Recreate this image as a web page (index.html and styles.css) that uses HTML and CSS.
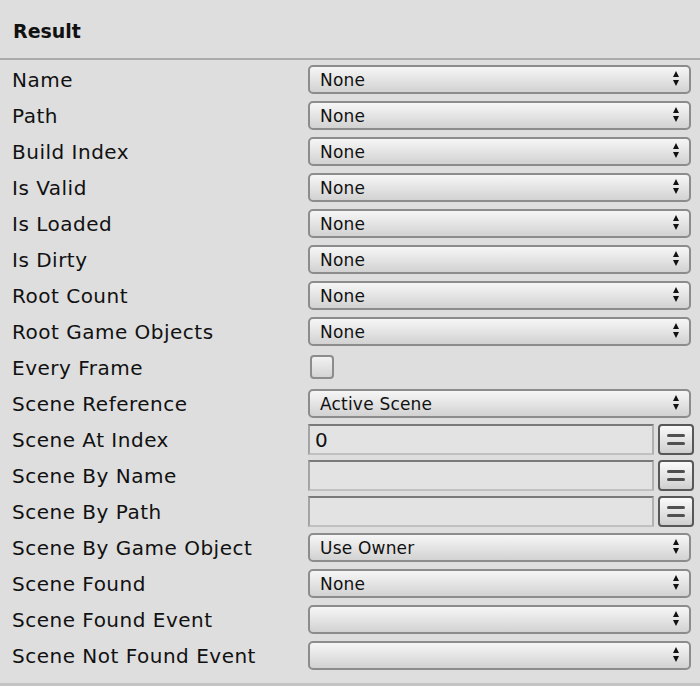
FILE: index.html
```html
<!DOCTYPE html>
<html>
<head>
<meta charset="utf-8">
<link rel="stylesheet" href="styles.css">
</head>
<body>
<div class="panel">
  <div class="header">Result</div>
  <div class="rows">
    <div class="row"><span class="label">Name</span><div class="dropdown"><span class="val">None</span><svg class="arrows" viewBox="0 0 8 18" width="8" height="18"><path d="M1 7 L4 1 L7 7 Z M1 10 L4 16 L7 10 Z" fill="#111"/></svg></div></div>
    <div class="row"><span class="label">Path</span><div class="dropdown"><span class="val">None</span><svg class="arrows" viewBox="0 0 8 18" width="8" height="18"><path d="M1 7 L4 1 L7 7 Z M1 10 L4 16 L7 10 Z" fill="#111"/></svg></div></div>
    <div class="row"><span class="label">Build Index</span><div class="dropdown"><span class="val">None</span><svg class="arrows" viewBox="0 0 8 18" width="8" height="18"><path d="M1 7 L4 1 L7 7 Z M1 10 L4 16 L7 10 Z" fill="#111"/></svg></div></div>
    <div class="row"><span class="label">Is Valid</span><div class="dropdown"><span class="val">None</span><svg class="arrows" viewBox="0 0 8 18" width="8" height="18"><path d="M1 7 L4 1 L7 7 Z M1 10 L4 16 L7 10 Z" fill="#111"/></svg></div></div>
    <div class="row"><span class="label">Is Loaded</span><div class="dropdown"><span class="val">None</span><svg class="arrows" viewBox="0 0 8 18" width="8" height="18"><path d="M1 7 L4 1 L7 7 Z M1 10 L4 16 L7 10 Z" fill="#111"/></svg></div></div>
    <div class="row"><span class="label">Is Dirty</span><div class="dropdown"><span class="val">None</span><svg class="arrows" viewBox="0 0 8 18" width="8" height="18"><path d="M1 7 L4 1 L7 7 Z M1 10 L4 16 L7 10 Z" fill="#111"/></svg></div></div>
    <div class="row"><span class="label">Root Count</span><div class="dropdown"><span class="val">None</span><svg class="arrows" viewBox="0 0 8 18" width="8" height="18"><path d="M1 7 L4 1 L7 7 Z M1 10 L4 16 L7 10 Z" fill="#111"/></svg></div></div>
    <div class="row"><span class="label">Root Game Objects</span><div class="dropdown"><span class="val">None</span><svg class="arrows" viewBox="0 0 8 18" width="8" height="18"><path d="M1 7 L4 1 L7 7 Z M1 10 L4 16 L7 10 Z" fill="#111"/></svg></div></div>
    <div class="row"><span class="label">Every Frame</span><div class="control"><div class="checkbox"></div></div></div>
    <div class="row"><span class="label">Scene Reference</span><div class="dropdown"><span class="val">Active Scene</span><svg class="arrows" viewBox="0 0 8 18" width="8" height="18"><path d="M1 7 L4 1 L7 7 Z M1 10 L4 16 L7 10 Z" fill="#111"/></svg></div></div>
    <div class="row"><span class="label">Scene At Index</span><div class="control field-row"><div class="field">0</div><div class="eqbtn"><span class="bar"></span><span class="bar"></span></div></div></div>
    <div class="row"><span class="label">Scene By Name</span><div class="control field-row"><div class="field"></div><div class="eqbtn"><span class="bar"></span><span class="bar"></span></div></div></div>
    <div class="row"><span class="label">Scene By Path</span><div class="control field-row"><div class="field"></div><div class="eqbtn"><span class="bar"></span><span class="bar"></span></div></div></div>
    <div class="row"><span class="label">Scene By Game Object</span><div class="dropdown"><span class="val">Use Owner</span><svg class="arrows" viewBox="0 0 8 18" width="8" height="18"><path d="M1 7 L4 1 L7 7 Z M1 10 L4 16 L7 10 Z" fill="#111"/></svg></div></div>
    <div class="row"><span class="label">Scene Found</span><div class="dropdown"><span class="val">None</span><svg class="arrows" viewBox="0 0 8 18" width="8" height="18"><path d="M1 7 L4 1 L7 7 Z M1 10 L4 16 L7 10 Z" fill="#111"/></svg></div></div>
    <div class="row"><span class="label">Scene Found Event</span><div class="dropdown"><span class="val"></span><svg class="arrows" viewBox="0 0 8 18" width="8" height="18"><path d="M1 7 L4 1 L7 7 Z M1 10 L4 16 L7 10 Z" fill="#111"/></svg></div></div>
    <div class="row"><span class="label">Scene Not Found Event</span><div class="dropdown"><span class="val"></span><svg class="arrows" viewBox="0 0 8 18" width="8" height="18"><path d="M1 7 L4 1 L7 7 Z M1 10 L4 16 L7 10 Z" fill="#111"/></svg></div></div>
  </div>
  <div class="footer"></div>
</div>
</body>
</html>
```

FILE: styles.css
```css
html, body {
  margin: 0;
  padding: 0;
  background: #dedede;
}
.panel {
  width: 700px;
  height: 686px;
  background: #dedede;
  font-family: "DejaVu Sans", "Liberation Sans", sans-serif;
  color: #111;
  display: flex;
  flex-direction: column;
}
.header {
  box-sizing: border-box;
  border-bottom: 2px solid #ababab;
  padding-left: 13px;
  display: flex;
  align-items: center;
  font-weight: bold;
  font-size: 19px;
  height: 60px;
  padding-top: 3px;
}
.rows {
  padding-top: 1px;
  display: flex;
  flex-direction: column;
}
.row {
  height: 36px;
  display: flex;
  align-items: center;
}
.label {
  width: 296px;
  padding-left: 12px;
  padding-top: 2px;
  font-size: 20px;
  letter-spacing: 0.5px;
  white-space: nowrap;
}
.dropdown {
  width: 383px;
  height: 29px;
  box-sizing: border-box;
  border: 2px solid #8c8c8c;
  border-radius: 5px;
  background: linear-gradient(#f6f6f6, #d2d2d2);
  display: flex;
  align-items: center;
  justify-content: space-between;
  padding: 1px 9px 0 10px;
  font-size: 17px;
  letter-spacing: 0.2px;
}
.arrows {
  margin-top: -1px;
}
.control {
  display: flex;
  align-items: center;
}
.checkbox {
  width: 24px;
  height: 24px;
  box-sizing: border-box;
  margin-left: 2px;
  border: 2px solid #8c8c8c;
  border-radius: 4px;
  background: linear-gradient(#f2f2f2, #d4d4d4);
}
.field-row {
  gap: 4px;
}
.field {
  width: 346px;
  height: 31px;
  box-sizing: border-box;
  border-top: 2px solid #7a7a7a;
  border-left: 2px solid #a4a4a4;
  border-right: 2px solid #b0b0b0;
  border-bottom: 2px solid #c0c0c0;
  background: #e3e3e3;
  font-size: 20px;
  padding-left: 5px;
  padding-top: 2px;
  display: flex;
  align-items: center;
}
.eqbtn {
  width: 36px;
  height: 31px;
  box-sizing: border-box;
  border: 2px solid #585858;
  border-radius: 4px;
  background: linear-gradient(#fafafa, #cfcfcf);
  display: flex;
  flex-direction: column;
  align-items: center;
  justify-content: center;
  gap: 5px;
}
.bar {
  width: 18px;
  height: 3px;
  border-radius: 2px;
  background: #505050;
}
.footer {
  margin-top: 10px;
  border-top: 3px solid #c4c4c4;
}
```
